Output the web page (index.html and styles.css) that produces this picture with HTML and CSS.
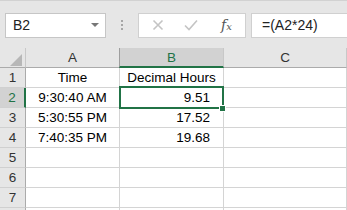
FILE: index.html
```html
<!DOCTYPE html>
<html>
<head>
    <link rel="stylesheet" href="styles.css">
</head>
<body>
    <div class="toolbar">
        <div class="namebox">
            <span class="ref">B2</span>
            <span class="caret"></span>
        </div>
        <div class="grip"><i></i><i></i><i></i></div>
        <div class="buttons">
            <svg class="btn" width="12" height="12" viewBox="0 0 12 12">
                <path d="M1.5 1.5 L10.5 10.5 M10.5 1.5 L1.5 10.5" stroke="#c4c4c4" stroke-width="1.6" fill="none"/>
            </svg>
            <svg class="btn" width="14" height="12" viewBox="0 0 14 12">
                <path d="M1 6.5 L5 10.5 L13 1.5" stroke="#c4c4c4" stroke-width="1.6" fill="none"/>
            </svg>
            <span class="fx">f<small>x</small></span>
        </div>
        <div class="formula">=(A2*24)</div>
    </div>

    <div class="sheet">
        <div class="corner"><span class="tri"></span></div>
        <div class="colhead">A</div>
        <div class="colhead active">B</div>
        <div class="colhead">C</div>

        <div class="rowhead">1</div>
        <div class="cell center">Time</div>
        <div class="cell center">Decimal Hours</div>
        <div class="cell"></div>

        <div class="rowhead active">2</div>
        <div class="cell center">9:30:40 AM</div>
        <div class="cell num selected">9.51<span class="handle"></span></div>
        <div class="cell"></div>

        <div class="rowhead">3</div>
        <div class="cell center">5:30:55 PM</div>
        <div class="cell num">17.52</div>
        <div class="cell"></div>

        <div class="rowhead">4</div>
        <div class="cell center">7:40:35 PM</div>
        <div class="cell num">19.68</div>
        <div class="cell"></div>

        <div class="rowhead">5</div>
        <div class="cell"></div>
        <div class="cell"></div>
        <div class="cell"></div>

        <div class="rowhead">6</div>
        <div class="cell"></div>
        <div class="cell"></div>
        <div class="cell"></div>

        <div class="rowhead">7</div>
        <div class="cell"></div>
        <div class="cell"></div>
        <div class="cell"></div>

        <div class="rowhead"></div>
        <div class="cell"></div>
        <div class="cell"></div>
        <div class="cell"></div>
    </div>
</body>
</html>
```

FILE: styles.css
```css
body {
    margin: 0;
    width: 347px;
    height: 210px;
    overflow: hidden;
    background: #fff;
    font-family: "Liberation Sans", Arial, sans-serif;
    color: #000;
}

/* formula bar */
.toolbar {
    display: flex;
    align-items: center;
    height: 48px;
    box-sizing: border-box;
    padding: 11px 0 10px 5px;
    background: #e6e6e6;
    border-top: 1px solid #d2d2d2;
}
.namebox {
    display: flex;
    align-items: center;
    justify-content: space-between;
    width: 101px;
    height: 25px;
    box-sizing: border-box;
    padding: 0 6px 0 7px;
    background: #fff;
    border: 1px solid #c6c6c6;
}
.ref {
    font-size: 14px;
    color: #222;
}
.caret {
    width: 0;
    height: 0;
    border-left: 4px solid transparent;
    border-right: 4px solid transparent;
    border-top: 4px solid #777;
}
.grip {
    display: flex;
    flex-direction: column;
    gap: 2px;
    width: 32px;
    align-items: center;
}
.grip i {
    width: 2px;
    height: 2px;
    background: #a6a6a6;
}
.buttons {
    display: flex;
    align-items: center;
    width: 108px;
    height: 25px;
    box-sizing: border-box;
    padding-left: 13px;
    background: #fff;
    border: 1px solid #d0d0d0;
}
.btn {
    margin-right: 20px;
}
.buttons .btn + .btn {
    margin-right: 23px;
}
.fx {
    font-family: "DejaVu Serif", "Liberation Serif", serif;
    font-style: italic;
    font-size: 14px;
    color: #555;
}
.fx small {
    font-size: 10px;
}
.formula {
    flex: 1;
    height: 25px;
    box-sizing: border-box;
    margin-left: 5px;
    padding: 3px 0 0 10px;
    background: #fff;
    border: 1px solid #d0d0d0;
    border-right: none;
    font-size: 14px;
    color: #222;
}

/* grid */
.sheet {
    display: grid;
    grid-template-columns: 26px 94px 104px 123px;
    grid-auto-rows: 20px;
    font-size: 13.5px;
}
.sheet > div {
    box-sizing: border-box;
    display: flex;
    align-items: center;
}
.corner {
    background: #e6e6e6;
    border-right: 1px solid #c8c8c8;
    border-bottom: 1px solid #ababab;
    justify-content: center;
}
.tri {
    width: 0;
    height: 0;
    margin: 5px 0 0 6px;
    border-left: 12px solid transparent;
    border-bottom: 12px solid #b7b7b7;
}
.colhead {
    justify-content: center;
    background: #e6e6e6;
    border-right: 1px solid #c8c8c8;
    border-bottom: 1px solid #ababab;
    color: #333;
}
.colhead.active {
    background: #d2d2d2;
    border-bottom: 2px solid #217346;
    border-left: 1px solid #9e9e9e;
    margin-left: -1px;
    color: #217346;
}
.rowhead {
    justify-content: center;
    background: #e6e6e6;
    border-right: 1px solid #ababab;
    border-bottom: 1px solid #d0d0d0;
    color: #333;
}
.rowhead.active {
    background: #d2d2d2;
    border-right: 2px solid #217346;
    color: #217346;
}
.cell {
    border-right: 1px solid #d4d4d4;
    border-bottom: 1px solid #d4d4d4;
    white-space: nowrap;
}
.center {
    justify-content: center;
}
.num {
    justify-content: flex-end;
    padding-right: 13px;
}
.selected {
    position: relative;
}
.selected::after {
    content: "";
    position: absolute;
    left: -1px;
    top: -2px;
    right: -1px;
    bottom: -2px;
    border: 2px solid #217346;
}
.handle {
    position: absolute;
    right: -3px;
    bottom: -5px;
    width: 5px;
    height: 5px;
    background: #217346;
    border: 1px solid #fff;
    z-index: 1;
}
```
